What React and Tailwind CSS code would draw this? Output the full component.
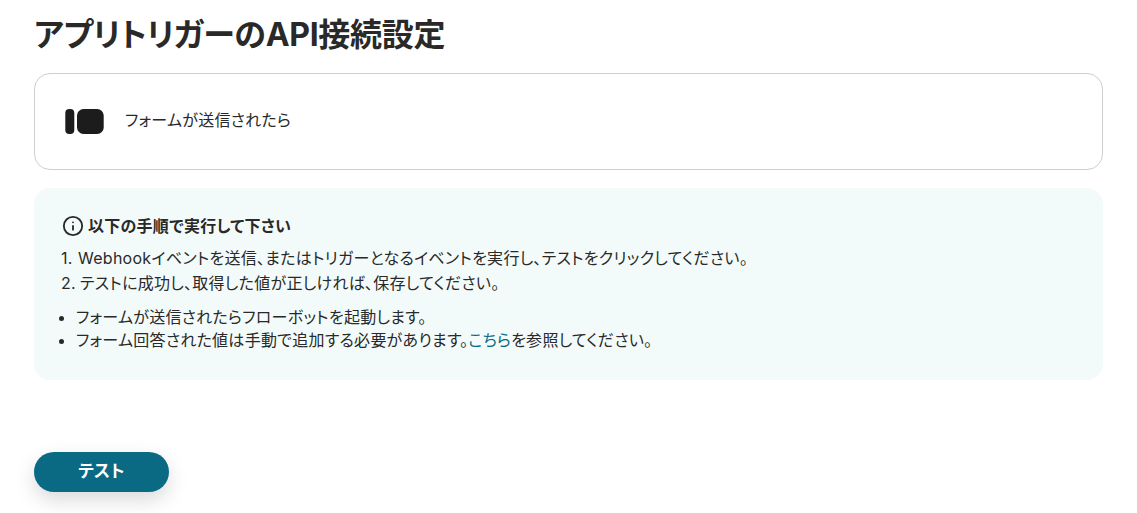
import { Info } from 'lucide-react';

export default function App() {
  return (
    <div className="w-[1137px] h-[513px] overflow-hidden bg-white text-[#292929] tracking-[0.27px] font-['Inter','Noto_Sans_CJK_JP',sans-serif] [font-feature-settings:'palt']">
      <div className="w-[1069px] ml-[34px]">
        <h1 className="pt-[14px] pb-[1px] text-[32px] leading-[42px] tracking-[-0.3px] font-bold">アプリトリガーのAPI接続設定</h1>

        {/* App card */}
        <div className="mt-[16px] h-[97px] rounded-2xl border border-[#cfcfcf] flex items-center pl-[30px] gap-[21px]">
          <svg width="39" height="25" viewBox="0 0 39 25">
            <rect x="0.3" y="0" width="9" height="25" rx="4" fill="#1c1c1c" />
            <rect x="12" y="0" width="26.7" height="25" rx="6.5" fill="#1c1c1c" />
          </svg>
          <span className="text-base -mt-[3px]">フォームが送信されたら</span>
        </div>

        {/* Instructions */}
        <div className="mt-[18px] h-[192px] rounded-2xl bg-[#f3fbfa] pl-[27px] pt-[27px] text-base">
          <div className="flex items-center gap-[4px] font-bold leading-5">
            <Info size={22} strokeWidth={2} className="ml-[1px]" />
            <span>以下の手順で実行して下さい</span>
          </div>
          <ol className="mt-[9px] leading-[25px]">
            <li className="flex"><span className="w-[17px]">1.</span><span>Webhookイベントを送信、またはトリガーとなるイベントを実行し、テストをクリックしてください。</span></li>
            <li className="flex"><span className="w-[19px]">2.</span><span>テストに成功し、取得した値が正しければ、保存してください。</span></li>
          </ol>
          <ul className="mt-[10px] list-disc pl-[15px] leading-[23px]">
            <li>フォームが送信されたらフローボットを起動します。</li>
            <li>フォーム回答された値は手動で追加する必要があります。<span className="text-[#086a87]">こちら</span>を参照してください。</li>
          </ul>
        </div>

        <button className="mt-[72px] w-[135px] h-10 rounded-full bg-[#0a6a84] text-white font-bold text-[17px] shadow-[0_8px_20px_rgba(0,0,0,0.15)]">テスト</button>
      </div>
    </div>
  );
}
